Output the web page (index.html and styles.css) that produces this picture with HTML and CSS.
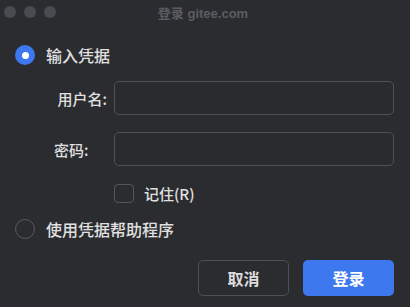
FILE: index.html
```html
<!DOCTYPE html>
<html lang="zh">
<head>
<meta charset="utf-8">
<title>登录 gitee.com</title>
<link rel="stylesheet" href="styles.css">
</head>
<body>
<div class="window">
  <div class="titlebar">
    <div class="lights"><span class="light"></span><span class="light"></span><span class="light"></span></div>
    <div class="title">登录 gitee.com</div>
    <div></div>
  </div>
  <div class="content">
    <div class="radio-row first">
      <span class="radio checked"><span class="dot"></span></span>
      <span class="radio-label">输入凭据</span>
    </div>
    <div class="form">
      <label class="label">用户名:</label>
      <div class="input"></div>
      <label class="label">密码:</label>
      <div class="input"></div>
    </div>
    <div class="check-row">
      <span class="checkbox"></span>
      <span class="check-label">记住(R)</span>
    </div>
    <div class="radio-row second">
      <span class="radio"></span>
      <span class="radio-label">使用凭据帮助程序</span>
    </div>
    <div class="buttons">
      <button class="btn cancel">取消</button>
      <button class="btn primary">登录</button>
    </div>
  </div>
</div>
</body>
</html>
```
FILE: styles.css
```css
html, body {
  margin: 0;
  padding: 0;
  background: #2b2c30;
}
body {
  width: 410px;
  height: 307px;
  overflow: hidden;
  font-family: "Noto Sans CJK SC", "Noto Sans", sans-serif;
  color: #e0e0e0;
}
.window {
  width: 410px;
  height: 307px;
}
.titlebar {
  height: 24px;
  display: grid;
  grid-template-columns: 1fr auto 1fr;
  align-items: center;
}
.lights {
  display: flex;
  gap: 8px;
  padding-left: 4px;
}
.light {
  width: 12px;
  height: 12px;
  border-radius: 50%;
  background: #4a4b50;
}
.title {
  font-family: "Liberation Sans", "Noto Sans CJK SC", sans-serif;
  font-size: 13px;
  font-weight: bold;
  color: #5b5c61;
  padding-right: 4px;
}
.content {
  padding: 0 16px 0 15px;
}
.radio-row {
  display: flex;
  align-items: center;
  height: 22px;
  gap: 11px;
}
.radio-row.first {
  margin-top: 20px;
}
.radio-row.second {
  margin-top: 15px;
}
.radio {
  box-sizing: border-box;
  width: 20px;
  height: 20px;
  border-radius: 50%;
  border: 1.5px solid #5a5b60;
  display: flex;
  align-items: center;
  justify-content: center;
}
.radio.checked {
  background: #3d78ef;
  border: none;
}
.dot {
  width: 7px;
  height: 7px;
  border-radius: 50%;
  background: #ffffff;
}
.radio-label {
  font-size: 16px;
  font-weight: 500;
  line-height: 22px;
}
.form {
  margin-top: 15px;
  display: grid;
  grid-template-columns: 99px 280px;
  grid-auto-rows: 34px;
  row-gap: 17px;
  align-items: center;
}
.label {
  font-size: 15px;
  font-weight: 500;
  text-align: right;
  padding-right: 7px;
}
.form .label:nth-of-type(2) {
  text-align: left;
  padding-left: 39px;
}
.input {
  box-sizing: border-box;
  height: 34px;
  border: 1px solid #505156;
  border-radius: 5px;
  background: #2a2b2f;
}
.check-row {
  margin-top: 18px;
  padding-left: 99px;
  display: flex;
  align-items: center;
  gap: 10px;
  height: 19px;
}
.checkbox {
  box-sizing: border-box;
  width: 20px;
  height: 19px;
  border: 1.5px solid #55565b;
  border-radius: 4px;
}
.check-label {
  font-size: 15px;
  font-weight: 500;
  line-height: 19px;
}
.buttons {
  margin-top: 20px;
  display: flex;
  justify-content: flex-end;
  gap: 14px;
}
.btn {
  box-sizing: border-box;
  width: 91px;
  height: 36px;
  border-radius: 5px;
  font-family: "Noto Sans CJK SC", sans-serif;
  font-size: 16px;
  font-weight: bold;
  padding: 0;
}
.cancel {
  background: transparent;
  border: 1.5px solid #505156;
  color: #dcdcdc;
}
.primary {
  background: #3d78ef;
  border: none;
  color: #ffffff;
}
```
